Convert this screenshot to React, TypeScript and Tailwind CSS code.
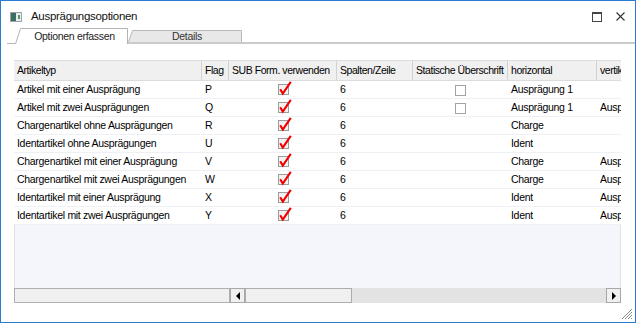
import React from "react";

const font = { fontFamily: '"Liberation Sans", Arial, sans-serif' };

type Row = {
  typ: string;
  flag: string;
  stat: boolean | null;
  hor: string;
  ver: string;
};

const rows: Row[] = [
  { typ: "Artikel mit einer Ausprägung", flag: "P", stat: false, hor: "Ausprägung 1", ver: "" },
  { typ: "Artikel mit zwei Ausprägungen", flag: "Q", stat: false, hor: "Ausprägung 1", ver: "Ausprägung 2" },
  { typ: "Chargenartikel ohne Ausprägungen", flag: "R", stat: null, hor: "Charge", ver: "" },
  { typ: "Identartikel ohne Ausprägungen", flag: "U", stat: null, hor: "Ident", ver: "" },
  { typ: "Chargenartikel mit einer Ausprägung", flag: "V", stat: null, hor: "Charge", ver: "Ausprägung 1" },
  { typ: "Chargenartikel mit zwei Ausprägungen", flag: "W", stat: null, hor: "Charge", ver: "Ausprägung 1" },
  { typ: "Identartikel mit einer Ausprägung", flag: "X", stat: null, hor: "Ident", ver: "Ausprägung 1" },
  { typ: "Identartikel mit zwei Ausprägungen", flag: "Y", stat: null, hor: "Ident", ver: "Ausprägung 1" },
];

function Checked() {
  return (
    <svg width="14" height="15" viewBox="0 0 14 15" className="block">
      <rect x="0.5" y="3.5" width="10" height="10" fill="#f2f2f2" stroke="#9c9c9c" />
      <path d="M2.2 8.3 L4.8 12.6 L12.8 0.8" fill="none" stroke="#f00000" strokeWidth="2.1" strokeLinejoin="miter" />
    </svg>
  );
}

function Unchecked() {
  return <div className="w-[11px] h-[11px] border border-[#a3a3a3] bg-white" />;
}

const colW = ["w-[188px]", "w-[27px]", "w-[108px]", "w-[76px]", "w-[95px]", "w-[89px]", "flex-1"];

export default function App() {
  return (
    <div className="w-[642px] h-[324px] bg-white" style={font}>
      <div className="relative w-[636px] h-[323px] border border-[#2b7bd3] bg-white flex flex-col text-black">
        {/* title bar */}
        <div className="h-[27px] pt-[4px] pl-[9px] pr-[10px] flex items-center">
          <div className="w-[12px] h-[10px] border border-[#9aa3a8] flex">
            <div className="w-[5px] h-full bg-[#3e6e66]" />
            <div className="flex-1 h-full bg-[#e8efee] flex items-center justify-end pr-[1px]">
              <div className="w-[2px] h-[4px] bg-[#4c9c5c]" />
            </div>
          </div>
          <span className="ml-[9px] text-[11.5px] tracking-[-0.3px] text-[#111]">Ausprägungsoptionen</span>
          <div className="flex-1" />
          <div className="w-[10px] h-[10px] border border-[#444] border-t-2" />
          <svg width="9" height="9" viewBox="0 0 9 9" className="ml-[14px] mr-[0px]">
            <path d="M0.5 0.5 L8.5 8.5 M8.5 0.5 L0.5 8.5" stroke="#333" strokeWidth="1.1" />
          </svg>
        </div>

        {/* tabs */}
        <div className="flex h-[16px] pl-[6px]">
          <div className="w-[8px] h-full border-b border-[#b8b8b8]" />
          <div className="relative w-[113px] h-full flex items-center justify-center">
            <svg width="113" height="16" viewBox="0 0 113 16" className="absolute left-0 top-0">
              <path d="M0 16 L5.5 0.5 H112.5 V16 Z" fill="#ffffff" />
              <path d="M0.5 16 L5.5 0.5 H112.5 V16" fill="none" stroke="#b4b4b4" />
            </svg>
            <span className="relative pl-[6px] pt-[1px] text-[10.5px] tracking-[-0.3px] text-[#222]">Optionen erfassen</span>
          </div>
          <div className="relative w-[114px] h-full border-b-2 border-[#cbcbcb]">
            <svg width="114" height="14" viewBox="0 0 114 14" className="absolute left-0 top-0">
              <path d="M0 14 L4.5 2.5 H113.5 V14 Z" fill="#e8e8e8" />
              <path d="M0.5 14 L4.5 2.5 H113.5 V14" fill="none" stroke="#b8b8b8" />
            </svg>
            <div className="relative h-full flex items-center justify-center pt-[3px] pl-[4px] text-[10.5px] tracking-[-0.3px] text-[#333]">
              Details
            </div>
          </div>
          <div className="flex-1 h-full border-b-2 border-[#cbcbcb]" />
        </div>

        {/* grid */}
        <div className="mt-[16px] ml-[13px] w-[607px] flex flex-col text-[10.5px] tracking-[-0.3px]">
          {/* header */}
          <div className="flex h-[21px] bg-[#f0f0f0] border-t border-b border-[#dcdcdc]">
            {["Artikeltyp", "Flag", "SUB Form. verwenden", "Spalten/Zeile", "Statische Überschrift", "horizontal", "vertikal"].map(
              (h, i) => (
                <div
                  key={h}
                  className={`${colW[i]} h-full flex items-center pt-[1px] pl-[3px] overflow-hidden whitespace-nowrap tracking-[-0.45px] ${
                    i < 6 ? "border-r border-[#d2d2d2]" : ""
                  }`}
                >
                  {h}
                </div>
              )
            )}
          </div>
          {/* body */}
          <div className="h-[207px] bg-[#f5f6fb] border-l border-r border-[#e2e2e2] flex flex-col">
            {rows.map((r) => (
              <div key={r.flag} className="flex h-[18px] pt-[1px] bg-white border-b border-[#eef0f4] -mx-[1px]">
                <div className={`${colW[0]} flex items-center pl-[3px] whitespace-nowrap overflow-hidden`}>{r.typ}</div>
                <div className={`${colW[1]} flex items-center pl-[3px]`}>{r.flag}</div>
                <div className={`${colW[2]} flex items-center justify-center pl-[3px]`}>
                  <div className="-mt-[3px]">
                    <Checked />
                  </div>
                </div>
                <div className={`${colW[3]} flex items-center pl-[3px]`}>6</div>
                <div className={`${colW[4]} flex items-center justify-center`}>
                  {r.stat === false ? <Unchecked /> : null}
                </div>
                <div className={`${colW[5]} flex items-center pl-[3px] whitespace-nowrap overflow-hidden`}>{r.hor}</div>
                <div className={`${colW[6]} flex items-center pl-[3px] whitespace-nowrap overflow-hidden`}>{r.ver}</div>
              </div>
            ))}
          </div>
          {/* scrollbar */}
          <div className="flex h-[15px]">
            <div className="w-[216px] h-full bg-[#f0f0f0] border border-[#b0b0b0]" />
            <div className="w-[15px] h-full bg-[#f0f0f0] border border-[#a8a8a8] flex items-center justify-center">
              <div className="w-0 h-0 border-y-[4px] border-y-transparent border-r-[4px] border-r-black" />
            </div>
            <div className="w-[107px] h-full bg-[#f0f0f0] border border-[#adadad]" />
            <div className="flex-1 h-full bg-[#e3e3e3]" />
            <div className="w-[15px] h-full bg-[#f0f0f0] border border-[#a8a8a8] flex items-center justify-center">
              <div className="w-0 h-0 border-y-[4px] border-y-transparent border-l-[4px] border-l-black" />
            </div>
          </div>
        </div>

        {/* resize grip */}
        <svg width="12" height="12" viewBox="0 0 12 12" className="absolute right-[2px] bottom-[2px]">
          <path d="M11 1 L1 11 M11 4 L4 11 M11 7 L7 11 M11 10 L10 11" stroke="#8a8a8a" strokeWidth="1" />
        </svg>
      </div>
    </div>
  );
}
